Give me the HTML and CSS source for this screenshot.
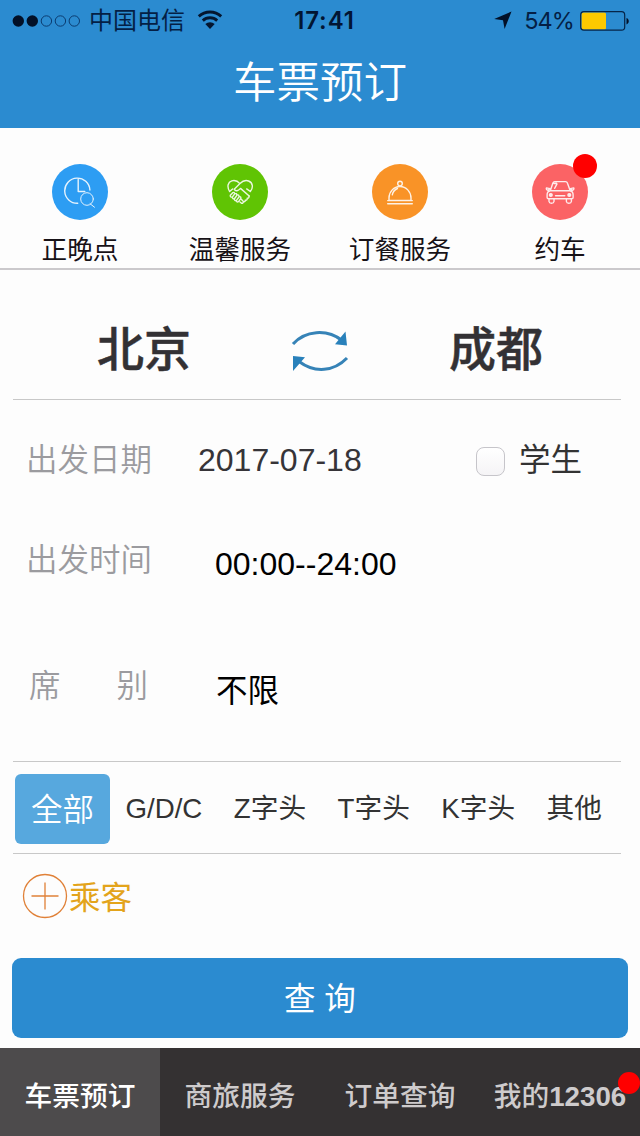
FILE: index.html
```html
<!DOCTYPE html>
<html lang="zh-CN">
<head>
<meta charset="utf-8">
<title>车票预订</title>
<link rel="stylesheet" href="styles.css">
</head>
<body>
<div class="app">
  <header class="header">
    <div class="status">
      <div class="status-left">
        <svg class="signal" viewBox="0 0 70 14" width="70" height="14"><circle cx="6.3" cy="7" r="5.7"/><circle cx="20.3" cy="7" r="5.7"/><g class="hollow"><circle cx="34.4" cy="7" r="5.2"/><circle cx="48.4" cy="7" r="5.2"/><circle cx="62.3" cy="7" r="5.2"/></g></svg>
        <span class="carrier">中国电信</span>
        <svg class="wifi" viewBox="0 0 26 20" width="26" height="20"><path d="M1.8 6.4a16.5 16.5 0 0 1 22.4 0M5.8 10.6a10.6 10.6 0 0 1 14.4 0"/><path class="solid" d="M8.3 14a7 7 0 0 1 9.4 0L13 19z"/></svg>
      </div>
      <span class="clock">17:41</span>
      <div class="status-right">
        <svg viewBox="0 0 18 18" width="18" height="18"><path d="M17.5.5 10.6 18 9 9.2.2 7.9z"/></svg>
        <span class="percent">54%</span>
        <svg class="battery" viewBox="0 0 50 20" width="50" height="20"><rect class="level" x="1.5" y="1.5" width="24.5" height="17" rx="1.5"/><rect class="case" x=".7" y=".7" width="44" height="18.4" rx="3.2"/><path d="M46.5 7c3 1 3 5.300 0 6.400z"/></svg>
      </div>
    </div>
    <h1 class="title">车票预订</h1>
  </header>

  <nav class="services">
    <a class="service">
      <span class="disc blue"><svg viewBox="0 0 56 56" width="56" height="56"><path d="M37.900 26a12.600 12.600 0 1 0-12.200 13.300M26.200 15.500v12h6.600"/><circle class="thin" cx="35" cy="35" r="6.300"/><path class="thin" d="M38 39.700l4.500 3.500"/></svg></span>
      <span class="service-name">正晚点</span>
    </a>
    <a class="service">
      <span class="disc green"><svg viewBox="0 0 56 56" width="56" height="56"><path d="M17.600 27.500c-3-5-1.600-9.500 2.200-10.600 3.100-.9 6 .3 8.200 2.700 2.500-2.600 5.500-3.700 8.600-2.600 4.200 1.500 5 6.500 1.700 10.500M28 19.600l-5.800 5.600c1.400 2.600 4 1.800 6.300-.8l8.700 7.600M17.600 27.500l3-2.500M38.300 27.500l-3.600-2.600"/><path d="M18.300 31.200l2.200-2.300q1.800-1.500 2.200 1 2.100-1 2.100 1.200 2.300-.8 2.200 1.600 2.400-.5 1.700 2l-2.200 2.900q-1.800 1-2-1-2.200.5-2-1.700-2.300.3-2-1.800-2.700.2-2.200-1.900zM28.800 34.800l2.600 2.700q2 .7 1.800-1.300 2.400.3 2-2 2.400 0 1.700-2.400M28 38l1.500 1.300q1.700.4 1.900-1.800M22.700 29.900l-2.200 3M24.900 31.300l-2.300 3.200M27 33l-2.400 3.200"/></svg></span>
      <span class="service-name">温馨服务</span>
    </a>
    <a class="service">
      <span class="disc orange"><svg viewBox="0 0 56 56" width="56" height="56"><circle cx="28" cy="19.600" r="2.300"/><path d="M17 36.400V34a11 11.500 0 0 1 22 0v2.400zM15.700 36.600h24.600M15.700 39.700h24.600M20.300 30.800c.7-3.200 2.500-5.200 5.200-6.300"/></svg></span>
      <span class="service-name">订餐服务</span>
    </a>
    <a class="service">
      <span class="disc red"><svg viewBox="0 0 56 56" width="56" height="56"><path d="M18.300 26.800l2.500-7.600q.5-1.600 2-1.600h10.700q1.500 0 2 1.600l2.700 7.600zM18.300 26.800q-3.200.6-3.200 4v2.700q0 1.300 1.500 1.300h23q1.500 0 1.500-1.300v-2.700q0-3.400-3.200-4M18 24.600l-3.500-.7q-.8 1.600 1.500 2.400zM38.200 24.600l3.500-.7q.8 1.600-1.500 2.400zM17 35v2.500q.3 1.800 2.500 1.800t2.500-1.800V35M34.400 35v2.500q.3 1.800 2.500 1.800t2.500-1.800V35M23.500 31.700h9.300M22.700 24.300l2.300-4.400M22 19.500l2.400-.2"/><circle class="lamp" cx="18.800" cy="31" r="1.400"/><circle class="lamp" cx="37.300" cy="31" r="1.400"/></svg><i class="badge"></i></span>
      <span class="service-name">约车</span>
    </a>
  </nav>

  <main class="form">
    <section class="route">
      <span class="city">北京</span>
      <svg class="swap" viewBox="0 0 58 42" width="58" height="42"><path d="M2 14C14 .5 36-1.500 51 10.500M56 28C43 41.500 24 43.500 8 31.500"/><path class="head" d="M54.500 1.500 56 15.500l-12-1.300zM2 41V26l12 1.200z"/></svg>
      <span class="city">成都</span>
    </section>
    <section class="fields">
      <div class="row date">
        <span class="label">出发日期</span><span class="value">2017-07-18</span>
        <label class="student"><span class="checkbox"></span>学生</label>
      </div>
      <div class="row time"><span class="label">出发时间</span><span class="value">00:00--24:00</span></div>
      <div class="row seat"><span class="label split"><span>席</span><span>别</span></span><span class="value">不限</span></div>
    </section>
    <section class="types">
      <span class="type active">全部</span><span class="type">G/D/C</span><span class="type">Z字头</span><span class="type">T字头</span><span class="type">K字头</span><span class="type">其他</span>
    </section>
    <section class="passenger">
      <svg viewBox="0 0 46 46" width="46" height="46"><circle cx="23" cy="23" r="21.500"/><path d="M9.500 23h27M23 9.500v27"/></svg>
      <span>乘客</span>
    </section>
    <button class="query">查 询</button>
  </main>

  <nav class="tabs">
    <a class="tab current">车票预订</a><a class="tab">商旅服务</a><a class="tab">订单查询</a><a class="tab">我的<b>12306</b><i class="badge tab-badge"></i></a>
  </nav>
</div>
</body>
</html>
```
FILE: styles.css
```css
* { box-sizing: border-box; }
body {
  margin: 0;
  background: #fdfdfd;
  color: #333;
  font-family: "Liberation Sans", "Noto Sans CJK SC", sans-serif;
}
svg { display: block; flex: none; }
.app { width: 640px; height: 1136px; display: flex; flex-direction: column; overflow: hidden; }

.header { height: 128px; background: #2b8bd0; }
.status {
  height: 40px;
  padding: 0 10px 0 12px;
  display: grid;
  grid-template-columns: 1fr auto 1fr;
  align-items: center;
  color: #041f45;
  fill: #021027;
  font-size: 24px;
  line-height: 40px;
}
.status-left, .status-right { display: flex; align-items: center; }
.status-right { justify-content: flex-end; }
.signal { margin-top: 1px; }
.hollow { fill: none; stroke: #0b3c70; stroke-width: 1; }
.carrier { margin-left: 7px; padding-top: 2px; line-height: 38px; }
.wifi { margin-left: 12px; fill: none; stroke: #04162f; stroke-width: 2.900; }
.solid { fill: #04162f; stroke: none; }
.clock { padding: 2px 0 0 7px; font: 600 24px/38px Inter, "Liberation Sans", sans-serif; letter-spacing: .9px; color: #021533; }
.percent { margin: 0 6px 0 12px; padding-top: 2px; font: 400 23.500px/38px Inter, "Liberation Sans", sans-serif; letter-spacing: -.9px; }
.battery { margin-top: 1px; }
.case { fill: none; stroke: #062548; stroke-width: 1.200; }
.level { fill: #fdc900; }
.title {
  margin: 0;
  height: 88px;
  text-align: center;
  color: #fff;
  font-size: 43.500px;
  font-weight: 350;
  line-height: 87px;
}

.services { height: 142px; padding-top: 36px; display: grid; grid-template-columns: repeat(4, 1fr); border-bottom: 2px solid #cbc9cc; }
.service { display: flex; flex-direction: column; align-items: center; }
.disc { position: relative; width: 56px; height: 56px; border-radius: 50%; }
.disc svg { fill: none; stroke: #fff; stroke-width: 1.400; stroke-linejoin: round; stroke-linecap: round; opacity: .88; }
.disc .thin { stroke-width: 1; }
.disc .lamp { fill: #fff; }
.blue { background: #2d9df3; }
.green { background: #60c404; }
.orange { background: #f99327; }
.red { background: #fb6365; }
.badge { position: absolute; top: -10px; right: -9px; width: 24px; height: 24px; border-radius: 50%; background: #f00; }
.service-name { margin-top: 10px; color: #171217; font-size: 25.600px; line-height: 40px; white-space: nowrap; }

.form { height: 778px; padding: 0 12px; display: flex; flex-direction: column; }
.route { height: 130px; margin: 0 7px 0 1px; padding: 0 78px 0 84px; display: flex; align-items: flex-start; justify-content: space-between; border-bottom: 1px solid #c8c8c8; }
.city { padding-top: 47px; font-size: 47px; font-weight: 500; line-height: 66px; color: #333134; -webkit-text-stroke: .5px #333134; }
.swap { margin-top: 60px; fill: none; stroke: #3683b7; stroke-width: 3; }
.head { fill: #2981bb; stroke: none; }

.fields { height: 362px; margin: 0 7px 0 1px; padding: 28px 0 0 13px; border-bottom: 1px solid #c8c8c8; font-size: 32px; line-height: 64px; }
.row { display: flex; height: 64px; }
.label { width: 126px; font-size: 31.500px; font-weight: 350; color: #9b9b9f; flex: none; }
.split { display: flex; justify-content: space-between; padding: 0 4px 0 3px; }
.value { margin-left: 63px; color: #000; }
.date .value { margin-left: 46px; width: 278px; color: #363438; }
.time { margin-top: 36px; }
.seat { margin-top: 62px; }
.time .value { padding-top: 4px; }
.seat .value { margin-left: 64px; padding-top: 5px; font-size: 31.500px; }
.student { display: flex; align-items: center; font-size: 31.500px; color: #333; }
.checkbox { width: 29px; height: 29px; margin: 3px 14px 0 0; border: 1px solid #c6c5ca; border-radius: 8px; background: linear-gradient(#fff, #f5f4f6); }

.types { height: 92px; margin: 0 7px 0 1px; padding: 0 19px 0 2px; display: flex; align-items: center; justify-content: space-between; border-bottom: 1px solid #c8c8c8; font-size: 27.700px; line-height: 70px; white-space: nowrap; }
.type { padding-top: 3px; }
.active { width: 95px; height: 70px; margin: 2px -16px 0 0; padding-top: 1px; background: #57a8de; border-radius: 6px; color: #fff; text-align: center; font-size: 31.500px; font-weight: 350; }
.passenger { height: 104px; padding: 19px 0 0 10px; display: flex; font-size: 31.500px; line-height: 50px; color: #e3a41b; }
.passenger span { margin-left: 1px; }
.passenger svg { fill: none; stroke: #e08138; stroke-width: 1.300; }
.query { height: 80px; padding: 3px 0 0; border: 0; border-radius: 9px; background: #2b8bd0; color: #fff; font: 400 31.500px/77px "Liberation Sans", "Noto Sans CJK SC", sans-serif; }

.tabs { height: 88px; display: grid; grid-template-columns: repeat(4, 1fr); background: #343132; }
.tab { position: relative; text-align: center; color: #cecbcc; font-size: 27.700px; font-weight: 500; line-height: 97px; height: 88px; white-space: nowrap; }
.current { background: #4d4b4c; color: #fff; }
.tab-badge { top: 24px; right: 0; width: 22px; height: 22px; }
```
